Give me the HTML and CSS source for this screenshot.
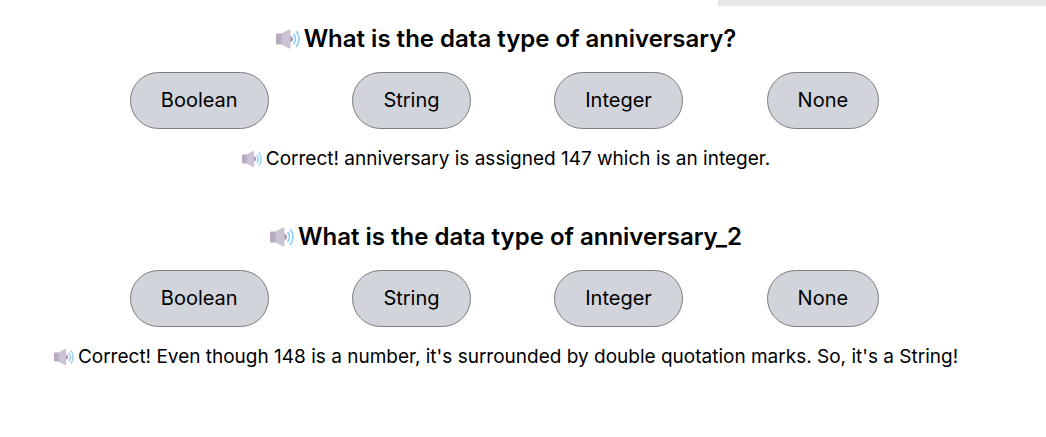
FILE: index.html
```html
<!DOCTYPE html>
<html lang="en">
<head>
<meta charset="utf-8">
<title>Data types quiz</title>
<link rel="stylesheet" href="styles.css">
</head>
<body>
<svg width="0" height="0" class="sprite" aria-hidden="true">
  <symbol id="speaker" viewBox="0 0 24 24">
    <circle cx="14" cy="12" r="3" fill="#a796b2"/>
    <path fill="#b9abbf" d="M1 6.500h5v11H1q-1 0-1-1v-9q0-1 1-1z"/>
    <path fill="#cbc2d4" d="M5.500 6.500l7.500-4q1.500-.5 1.500 1.500v16q0 2-1.500 1.500l-7.500-4z"/>
    <path fill="none" stroke="#8ccdf8" stroke-width="1.600" stroke-linecap="round" d="M18 7.500q3 4.500 0 9M20.500 4.500q5 7.500 0 15"/>
  </symbol>
</svg>
<div class="strip"></div>
<main class="quiz">
  <section class="question">
    <h2 class="title"><svg class="icon" aria-hidden="true"><use href="#speaker"/></svg>What is the data type of anniversary?</h2>
    <div class="options">
      <button class="option" type="button">Boolean</button>
      <button class="option" type="button">String</button>
      <button class="option" type="button">Integer</button>
      <button class="option" type="button">None</button>
    </div>
    <p class="feedback"><svg class="icon" aria-hidden="true"><use href="#speaker"/></svg>Correct! anniversary is assigned 147 which is an integer.</p>
  </section>
  <section class="question">
    <h2 class="title"><svg class="icon" aria-hidden="true"><use href="#speaker"/></svg>What is the data type of anniversary_2</h2>
    <div class="options">
      <button class="option" type="button">Boolean</button>
      <button class="option" type="button">String</button>
      <button class="option" type="button">Integer</button>
      <button class="option" type="button">None</button>
    </div>
    <p class="feedback"><svg class="icon" aria-hidden="true"><use href="#speaker"/></svg>Correct! Even though 148 is a number, it's surrounded by double quotation marks. So, it's a String!</p>
  </section>
</main>
</body>
</html>
```
FILE: styles.css
```css
body {
  margin: 0;
  background: #fff;
  color: #000;
  font-family: Inter, "Liberation Sans", sans-serif;
}
.sprite { position: absolute; }
.strip {
  height: 6px;
  margin-left: auto;
  width: 31.4%;
  background: #e7e7e7;
}
.quiz {
  display: flex;
  flex-direction: column;
  gap: 48px;
  padding: 17px 34px 0 0;
}
.title, .feedback {
  display: flex;
  align-items: center;
  justify-content: center;
  gap: 4px;
  margin: 0;
  white-space: nowrap;
}
.title {
  font-size: 24px;
  line-height: 32px;
  font-weight: 600;
}
.feedback {
  font-size: 19px;
  line-height: 28px;
}
.title .icon { width: 24px; height: 24px; }
.feedback .icon { width: 20px; height: 20px; }
.options {
  display: flex;
  justify-content: space-around;
  padding: 0 91px 0 88px;
  margin: 17px 0 16px;
}
.option {
  padding: 15px 30px;
  border: 1px solid #7d7d7d;
  border-radius: 29px;
  background: #d1d4db;
  color: #000;
  font: inherit;
  font-size: 20px;
  line-height: 25px;
}
```
